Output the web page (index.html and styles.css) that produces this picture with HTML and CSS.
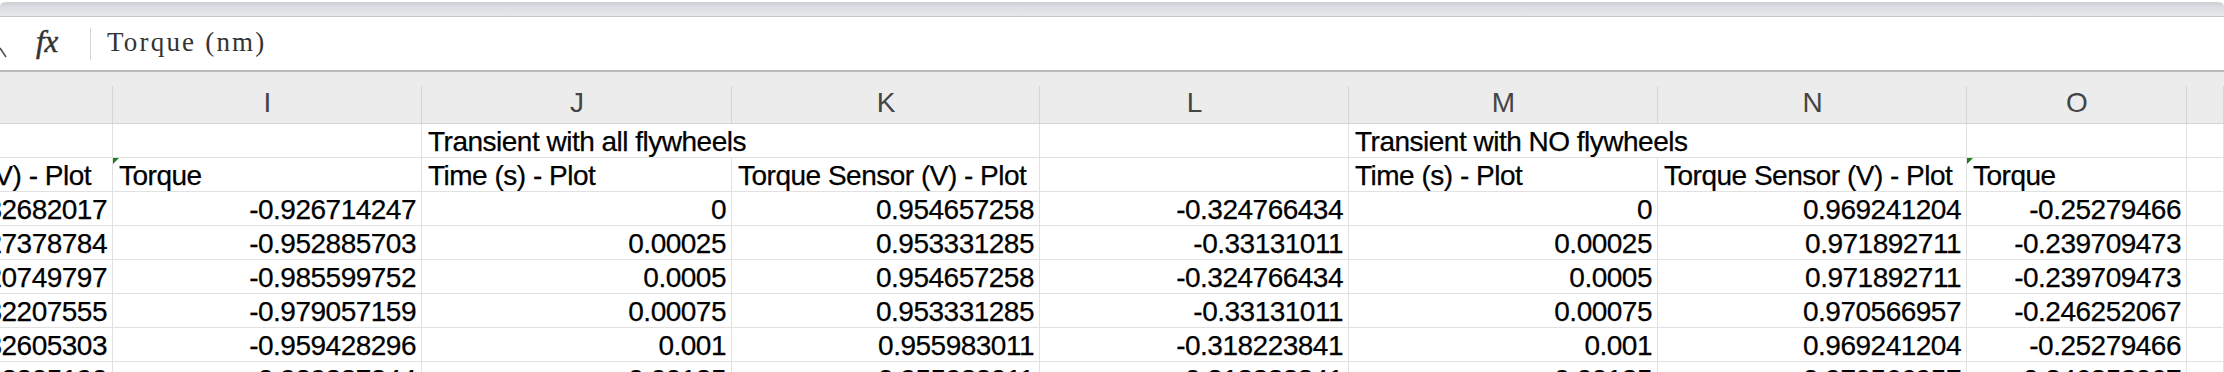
FILE: index.html
```html
<!DOCTYPE html>
<html lang="en">
<head>
    <meta charset="UTF-8">
    <title>Flywheel data - Sheet1</title>
    <link rel="stylesheet" href="styles.css">
</head>
<body>
    <div class="topbar"></div>

    <div class="formula-bar">
        <span class="fb-icon">
            <svg width="8" height="14" viewBox="0 0 8 14"><path d="M0 2 L6 11" stroke="#555" stroke-width="1.6" fill="none"/></svg>
        </span>
        <span class="fx">fx</span>
        <span class="fb-divider"></span>
        <span class="fb-content">Torque (nm)</span>
    </div>

    <div class="sheet">
        <!-- column headers -->
        <div class="col-head"></div>
        <div class="col-head">I</div>
        <div class="col-head">J</div>
        <div class="col-head">K</div>
        <div class="col-head">L</div>
        <div class="col-head">M</div>
        <div class="col-head">N</div>
        <div class="col-head">O</div>
        <div class="col-head"></div>

        <!-- row 1 -->
        <div class="cell"></div>
        <div class="cell"></div>
        <div class="cell span-2">Transient with all flywheels</div>
        <div class="cell"></div>
        <div class="cell span-2">Transient with NO flywheels</div>
        <div class="cell"></div>
        <div class="cell"></div>

        <!-- row 2 -->
        <div class="cell clip-left">Torque Sensor (V) - Plot</div>
        <div class="cell note">Torque</div>
        <div class="cell">Time (s) - Plot</div>
        <div class="cell">Torque Sensor (V) - Plot</div>
        <div class="cell"></div>
        <div class="cell">Time (s) - Plot</div>
        <div class="cell">Torque Sensor (V) - Plot</div>
        <div class="cell note">Torque</div>
        <div class="cell"></div>

        <!-- data -->
        <div class="cell num">0.932682017</div>
        <div class="cell num">-0.926714247</div>
        <div class="cell num">0</div>
        <div class="cell num">0.954657258</div>
        <div class="cell num">-0.324766434</div>
        <div class="cell num">0</div>
        <div class="cell num">0.969241204</div>
        <div class="cell num">-0.25279466</div>
        <div class="cell"></div>

        <div class="cell num">0.927378784</div>
        <div class="cell num">-0.952885703</div>
        <div class="cell num">0.00025</div>
        <div class="cell num">0.953331285</div>
        <div class="cell num">-0.33131011</div>
        <div class="cell num">0.00025</div>
        <div class="cell num">0.971892711</div>
        <div class="cell num">-0.239709473</div>
        <div class="cell"></div>

        <div class="cell num">0.920749797</div>
        <div class="cell num">-0.985599752</div>
        <div class="cell num">0.0005</div>
        <div class="cell num">0.954657258</div>
        <div class="cell num">-0.324766434</div>
        <div class="cell num">0.0005</div>
        <div class="cell num">0.971892711</div>
        <div class="cell num">-0.239709473</div>
        <div class="cell"></div>

        <div class="cell num">0.932207555</div>
        <div class="cell num">-0.979057159</div>
        <div class="cell num">0.00075</div>
        <div class="cell num">0.953331285</div>
        <div class="cell num">-0.33131011</div>
        <div class="cell num">0.00075</div>
        <div class="cell num">0.970566957</div>
        <div class="cell num">-0.246252067</div>
        <div class="cell"></div>

        <div class="cell num">0.932605303</div>
        <div class="cell num">-0.959428296</div>
        <div class="cell num">0.001</div>
        <div class="cell num">0.955983011</div>
        <div class="cell num">-0.318223841</div>
        <div class="cell num">0.001</div>
        <div class="cell num">0.969241204</div>
        <div class="cell num">-0.25279466</div>
        <div class="cell"></div>

        <div class="cell num">0.933305190</div>
        <div class="cell num">-0.939287344</div>
        <div class="cell num">0.00125</div>
        <div class="cell num">0.955983011</div>
        <div class="cell num">-0.318223841</div>
        <div class="cell num">0.00125</div>
        <div class="cell num">0.970566957</div>
        <div class="cell num">-0.246252067</div>
        <div class="cell"></div>
    </div>
</body>
</html>
```

FILE: styles.css
```css
* {
    margin: 0;
    padding: 0;
    box-sizing: border-box;
}

body {
    width: 2224px;
    height: 372px;
    overflow: hidden;
    background: #fff;
    font-family: "Liberation Sans", Arial, sans-serif;
    color: #000;
}

.topbar {
    height: 17px;
    border-top: 2px solid #fff;
    border-bottom: 1px solid #c4c7cb;
    border-radius: 6px 6px 0 0;
    background: linear-gradient(#cbced2 0%, #dcdfe3 40%, #e6e8eb 100%);
}

.formula-bar {
    height: 55px;
    display: flex;
    align-items: center;
    border-bottom: 2px solid #b8babc;
    background: #fff;
}

.fb-icon {
    width: 8px;
    display: flex;
    margin-top: 18px;
}

.fx {
    font-family: "Liberation Serif", "DejaVu Serif", serif;
    font-style: italic;
    font-size: 31px;
    -webkit-text-stroke: 0.5px #333;
    color: #333;
    margin-left: 28px;
    width: 54px;
    padding-bottom: 4px;
}

.fb-divider {
    width: 1px;
    height: 32px;
    background: #d6d6d6;
}

.fb-content {
    margin-left: 16px;
    font-family: "Liberation Serif", "DejaVu Serif", serif;
    font-size: 27px;
    letter-spacing: 2.2px;
    color: #333;
    padding-bottom: 2px;
}

.sheet {
    display: grid;
    grid-template-columns: 113px 309px 310px 308px 309px 309px 309px 220px 1fr;
    grid-template-rows: 52px;
    grid-auto-rows: 34px;
}

.col-head {
    background: linear-gradient(#d5d5d5, #d5d5d5) right bottom / 1px 37px no-repeat, #ececec;
    border-bottom: 1px solid #d5d5d5;
    display: flex;
    align-items: flex-end;
    justify-content: center;
    font-size: 28px;
    line-height: 32px;
    padding-bottom: 4px;
    color: #444;
}

.cell {
    position: relative;
    border-right: 1px solid #e1e1e1;
    border-bottom: 1px solid #e1e1e1;
    padding: 0 5px 0 6px;
    font-size: 28px;
    letter-spacing: -0.5px;
    line-height: 30px;
    -webkit-text-stroke: 0.25px #000;
    white-space: nowrap;
    overflow: hidden;
    display: flex;
    align-items: flex-end;
}

.span-2 {
    grid-column: span 2;
}

.num {
    justify-content: flex-end;
}

.clip-left {
    justify-content: flex-end;
    padding-right: 21px;
}

/* comment marker in the corner */
.note::before {
    content: "";
    position: absolute;
    top: 0;
    left: 0;
    border-top: 6px solid #1e7e1e;
    border-right: 6px solid transparent;
}
```
